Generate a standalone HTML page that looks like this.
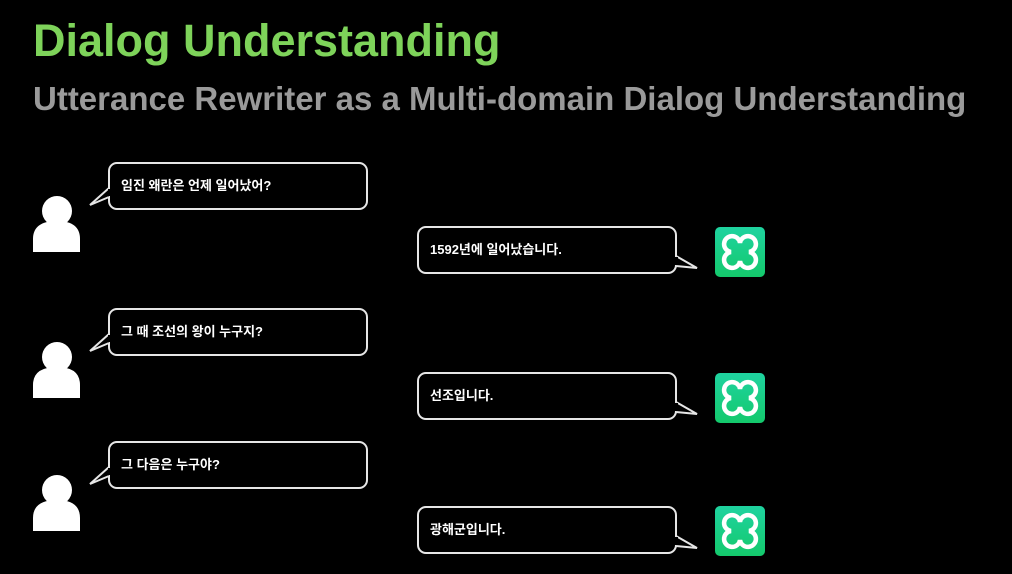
<!DOCTYPE html>
<html><head><meta charset="utf-8"><style>
body{margin:0;width:1012px;height:574px;background:#000;overflow:hidden;position:relative;font-family:"Liberation Sans","Noto Sans CJK KR",sans-serif}
.t{position:absolute;left:33px;top:15px;font-size:45px;font-weight:bold;color:#7ed35a;margin:0;white-space:nowrap}
.s{position:absolute;left:33px;top:80px;font-size:33px;font-weight:bold;color:#9a9a9a;white-space:nowrap}
.b{position:absolute;width:245px;height:44px;border:2px solid #e6e6e6;border-radius:9px;color:#fff;font-size:13px;font-weight:bold;line-height:44px;padding-left:11px;box-sizing:content-box;background:#000}
svg{position:absolute}
</style></head><body>
<div class="t">Dialog Understanding</div>
<div class="s">Utterance Rewriter as a Multi-domain Dialog Understanding</div>

<svg width="1012" height="574" style="left:0;top:0">
<defs>
<linearGradient id="g" x1="0" y1="0" x2="0" y2="1"><stop offset="0" stop-color="#1fd3a0"/><stop offset="1" stop-color="#14c96c"/></linearGradient>
<g id="p"><circle cx="57" cy="14" r="15" fill="#fff"/><path d="M33 55 V42 Q33 24 57 24 Q80 24 80 42 V55 Z" fill="#fff"/></g>
<g id="bot"><rect x="0" y="0" width="50" height="50" rx="5" fill="url(#g)"/>
<path d="M25 16 A8 8 0 1 0 16 25 A8 8 0 1 0 25 34 A8 8 0 1 0 34 25 A8 8 0 1 0 25 16 Z" fill="none" stroke="#fff" stroke-width="4.5"/></g>
</defs>
<use href="#p" x="0" y="197"/>
<use href="#p" x="0" y="343"/>
<use href="#p" x="0" y="476"/>
<use href="#bot" x="715" y="227"/>
<use href="#bot" x="715" y="373"/>
<use href="#bot" x="715" y="506"/>
</svg>

<div class="b" style="left:108px;top:162px">임진 왜란은 언제 일어났어?</div>
<div class="b" style="left:417px;top:226px">1592년에 일어났습니다.</div>
<div class="b" style="left:108px;top:308px">그 때 조선의 왕이 누구지?</div>
<div class="b" style="left:417px;top:372px">선조입니다.</div>
<div class="b" style="left:108px;top:441px">그 다음은 누구야?</div>
<div class="b" style="left:417px;top:506px">광해군입니다.</div>

<svg width="1012" height="574" style="left:0;top:0">
<g fill="#000" stroke="#e6e6e6" stroke-width="2" stroke-linejoin="miter">
<path d="M109 188 L90 205 L109 197"/>
<path d="M109 334 L90 351 L109 343"/>
<path d="M109 467 L90 484 L109 476"/>
<path d="M676 256 L697 268 L676 266"/>
<path d="M676 402 L697 414 L676 412"/>
<path d="M676 536 L697 548 L676 546"/>
</g>
<g fill="#000">
<rect x="108" y="189" width="3" height="7"/>
<rect x="675" y="257" width="3" height="8"/>
<rect x="675" y="403" width="3" height="8"/>
<rect x="675" y="537" width="3" height="8"/>
<rect x="108" y="335" width="3" height="7"/>
<rect x="108" y="468" width="3" height="7"/>
</g>
</svg>
</body></html>
